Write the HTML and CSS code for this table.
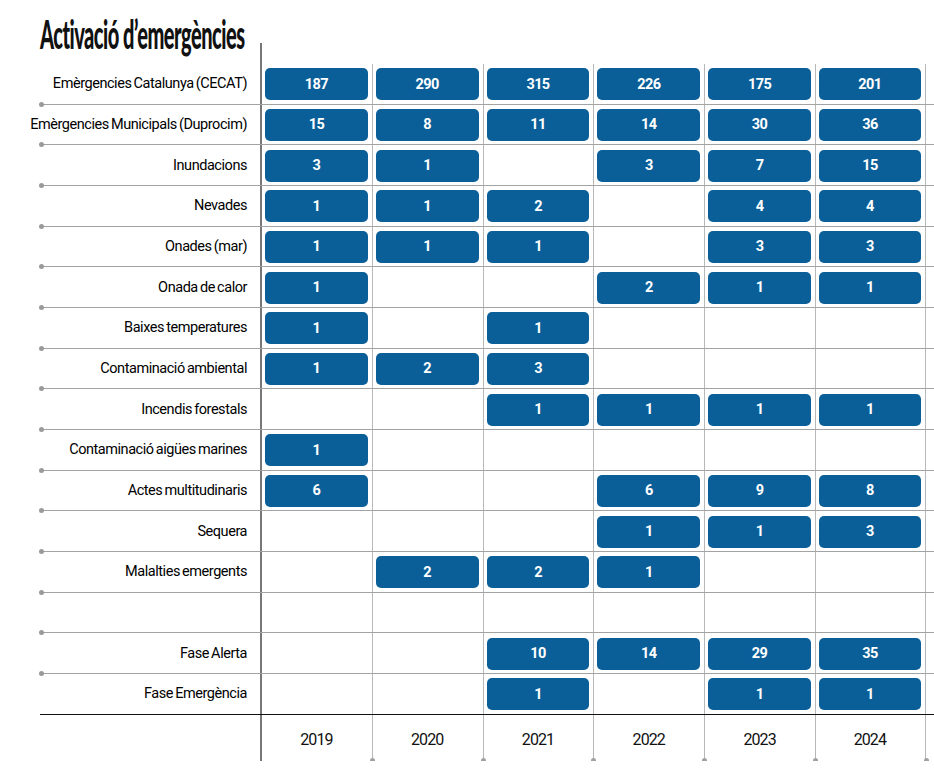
FILE: index.html
```html
<!DOCTYPE html>
<html lang="ca">
<head>
<meta charset="utf-8">
<title>Activació d’emergències</title>
<link rel="stylesheet" href="styles.css">
</head>
<body>
<div class="chart">
  <div class="head">
    <h1 class="title"><span class="title-text">Activació d’emergències</span></h1>
    <div class="axis-col"><div class="axis-top"></div></div>
  </div>

  <div class="row"><div class="label">Emèrgencies Catalunya (CECAT)</div><div class="cell"><span class="bar">187</span></div><div class="cell"><span class="bar">290</span></div><div class="cell"><span class="bar">315</span></div><div class="cell"><span class="bar">226</span></div><div class="cell"><span class="bar">175</span></div><div class="cell"><span class="bar">201</span></div></div>
  <div class="row"><div class="label">Emèrgencies Municipals (Duprocim)</div><div class="cell"><span class="bar">15</span></div><div class="cell"><span class="bar">8</span></div><div class="cell"><span class="bar">11</span></div><div class="cell"><span class="bar">14</span></div><div class="cell"><span class="bar">30</span></div><div class="cell"><span class="bar">36</span></div></div>
  <div class="row"><div class="label">Inundacions</div><div class="cell"><span class="bar">3</span></div><div class="cell"><span class="bar">1</span></div><div class="cell"></div><div class="cell"><span class="bar">3</span></div><div class="cell"><span class="bar">7</span></div><div class="cell"><span class="bar">15</span></div></div>
  <div class="row"><div class="label">Nevades</div><div class="cell"><span class="bar">1</span></div><div class="cell"><span class="bar">1</span></div><div class="cell"><span class="bar">2</span></div><div class="cell"></div><div class="cell"><span class="bar">4</span></div><div class="cell"><span class="bar">4</span></div></div>
  <div class="row"><div class="label">Onades (mar)</div><div class="cell"><span class="bar">1</span></div><div class="cell"><span class="bar">1</span></div><div class="cell"><span class="bar">1</span></div><div class="cell"></div><div class="cell"><span class="bar">3</span></div><div class="cell"><span class="bar">3</span></div></div>
  <div class="row"><div class="label">Onada de calor</div><div class="cell"><span class="bar">1</span></div><div class="cell"></div><div class="cell"></div><div class="cell"><span class="bar">2</span></div><div class="cell"><span class="bar">1</span></div><div class="cell"><span class="bar">1</span></div></div>
  <div class="row"><div class="label">Baixes temperatures</div><div class="cell"><span class="bar">1</span></div><div class="cell"></div><div class="cell"><span class="bar">1</span></div><div class="cell"></div><div class="cell"></div><div class="cell"></div></div>
  <div class="row"><div class="label">Contaminació ambiental</div><div class="cell"><span class="bar">1</span></div><div class="cell"><span class="bar">2</span></div><div class="cell"><span class="bar">3</span></div><div class="cell"></div><div class="cell"></div><div class="cell"></div></div>
  <div class="row"><div class="label">Incendis forestals</div><div class="cell"></div><div class="cell"></div><div class="cell"><span class="bar">1</span></div><div class="cell"><span class="bar">1</span></div><div class="cell"><span class="bar">1</span></div><div class="cell"><span class="bar">1</span></div></div>
  <div class="row"><div class="label">Contaminació aigües marines</div><div class="cell"><span class="bar">1</span></div><div class="cell"></div><div class="cell"></div><div class="cell"></div><div class="cell"></div><div class="cell"></div></div>
  <div class="row"><div class="label">Actes multitudinaris</div><div class="cell"><span class="bar">6</span></div><div class="cell"></div><div class="cell"></div><div class="cell"><span class="bar">6</span></div><div class="cell"><span class="bar">9</span></div><div class="cell"><span class="bar">8</span></div></div>
  <div class="row"><div class="label">Sequera</div><div class="cell"></div><div class="cell"></div><div class="cell"></div><div class="cell"><span class="bar">1</span></div><div class="cell"><span class="bar">1</span></div><div class="cell"><span class="bar">3</span></div></div>
  <div class="row"><div class="label">Malalties emergents</div><div class="cell"></div><div class="cell"><span class="bar">2</span></div><div class="cell"><span class="bar">2</span></div><div class="cell"><span class="bar">1</span></div><div class="cell"></div><div class="cell"></div></div>
  <div class="row"><div class="label"></div><div class="cell"></div><div class="cell"></div><div class="cell"></div><div class="cell"></div><div class="cell"></div><div class="cell"></div></div>
  <div class="row"><div class="label">Fase Alerta</div><div class="cell"></div><div class="cell"></div><div class="cell"><span class="bar">10</span></div><div class="cell"><span class="bar">14</span></div><div class="cell"><span class="bar">29</span></div><div class="cell"><span class="bar">35</span></div></div>
  <div class="row row-last"><div class="label">Fase Emergència</div><div class="cell"></div><div class="cell"></div><div class="cell"><span class="bar">1</span></div><div class="cell"></div><div class="cell"><span class="bar">1</span></div><div class="cell"><span class="bar">1</span></div></div>

  <div class="foot"><div class="label"></div><div class="cell year">2019</div><div class="cell year">2020</div><div class="cell year">2021</div><div class="cell year">2022</div><div class="cell year">2023</div><div class="cell year">2024</div></div>
</div>
</body>
</html>
```

FILE: styles.css
```css
html, body {
  margin: 0;
  padding: 0;
  background: #ffffff;
}

body {
  font-family: "Roboto", "Liberation Sans", sans-serif;
  color: #111;
}

.chart {
  padding-left: 40px;
  width: 894px;
}

.head {
  display: grid;
  grid-template-columns: 221px 1fr;
  height: 64px;
}

.title {
  margin: 0;
  padding-top: 13px;
  font-family: "Lato", "Liberation Sans", sans-serif;
  font-weight: 900;
  font-size: 40px;
  line-height: 42px;
  color: #111;
  white-space: nowrap;
}

.title-text {
  display: inline-block;
  letter-spacing: -1px;
  transform: scaleX(0.5);
  transform-origin: left center;
}

.axis-col {
  display: flex;
  flex-direction: column;
  justify-content: flex-end;
}

.axis-top {
  height: 21px;
  border-left: 2px solid #777;
  margin-left: -1px;
}

.row {
  position: relative;
  display: grid;
  grid-template-columns: 221px repeat(6, 110.8px) 3px;
  height: 40.67px;
  box-sizing: border-box;
  border-bottom: 1px solid #a3a3a3;
}

.row::before {
  content: "";
  position: absolute;
  left: -1px;
  bottom: -3px;
  width: 5px;
  height: 5px;
  border-radius: 50%;
  background: #9a9a9a;
}

.row-last {
  border-bottom-color: #111;
}

.row-last::before {
  display: none;
}

.label {
  display: flex;
  align-items: center;
  justify-content: flex-end;
  padding-right: 14px;
  font-size: 14.5px;
  letter-spacing: -0.45px;
  word-spacing: -1px;
  white-space: nowrap;
  color: #000;
}

.cell {
  display: flex;
  align-items: center;
  padding: 0 4px 0 3px;
  border-left: 1px solid #b8b8b8;
  min-width: 0;
}

.row .cell:nth-child(2),
.foot .cell:nth-child(2) {
  border-left: 2px solid #777;
  margin-left: -1px;
  padding-left: 3px;
}

.row .cell:nth-child(7),
.foot .cell:nth-child(7) {
  border-right: 1px solid #b8b8b8;
}

.bar {
  flex: 1;
  height: 32px;
  margin-top: 1px;
  border-radius: 5px;
  background: #0b5f99;
  color: #ffffff;
  font-weight: 700;
  font-size: 14.5px;
  letter-spacing: -0.6px;
  display: flex;
  align-items: center;
  justify-content: center;
}

.foot {
  display: grid;
  grid-template-columns: 221px repeat(6, 110.8px);
  height: 46px;
}

.foot .label {
  padding: 0;
}

.year {
  position: relative;
  justify-content: center;
  font-size: 16px;
  font-weight: 400;
  letter-spacing: -0.9px;
  color: #111;
  padding-top: 3px;
}

.year::after {
  content: "";
  position: absolute;
  left: -3px;
  bottom: -2px;
  width: 5px;
  height: 5px;
  border-radius: 50%;
  background: #a0a0a0;
}

.year:nth-child(7)::before {
  content: "";
  position: absolute;
  right: -4px;
  bottom: -2px;
  width: 5px;
  height: 5px;
  border-radius: 50%;
  background: #a0a0a0;
}

.foot .cell:nth-child(2)::after {
  display: none;
}
```
